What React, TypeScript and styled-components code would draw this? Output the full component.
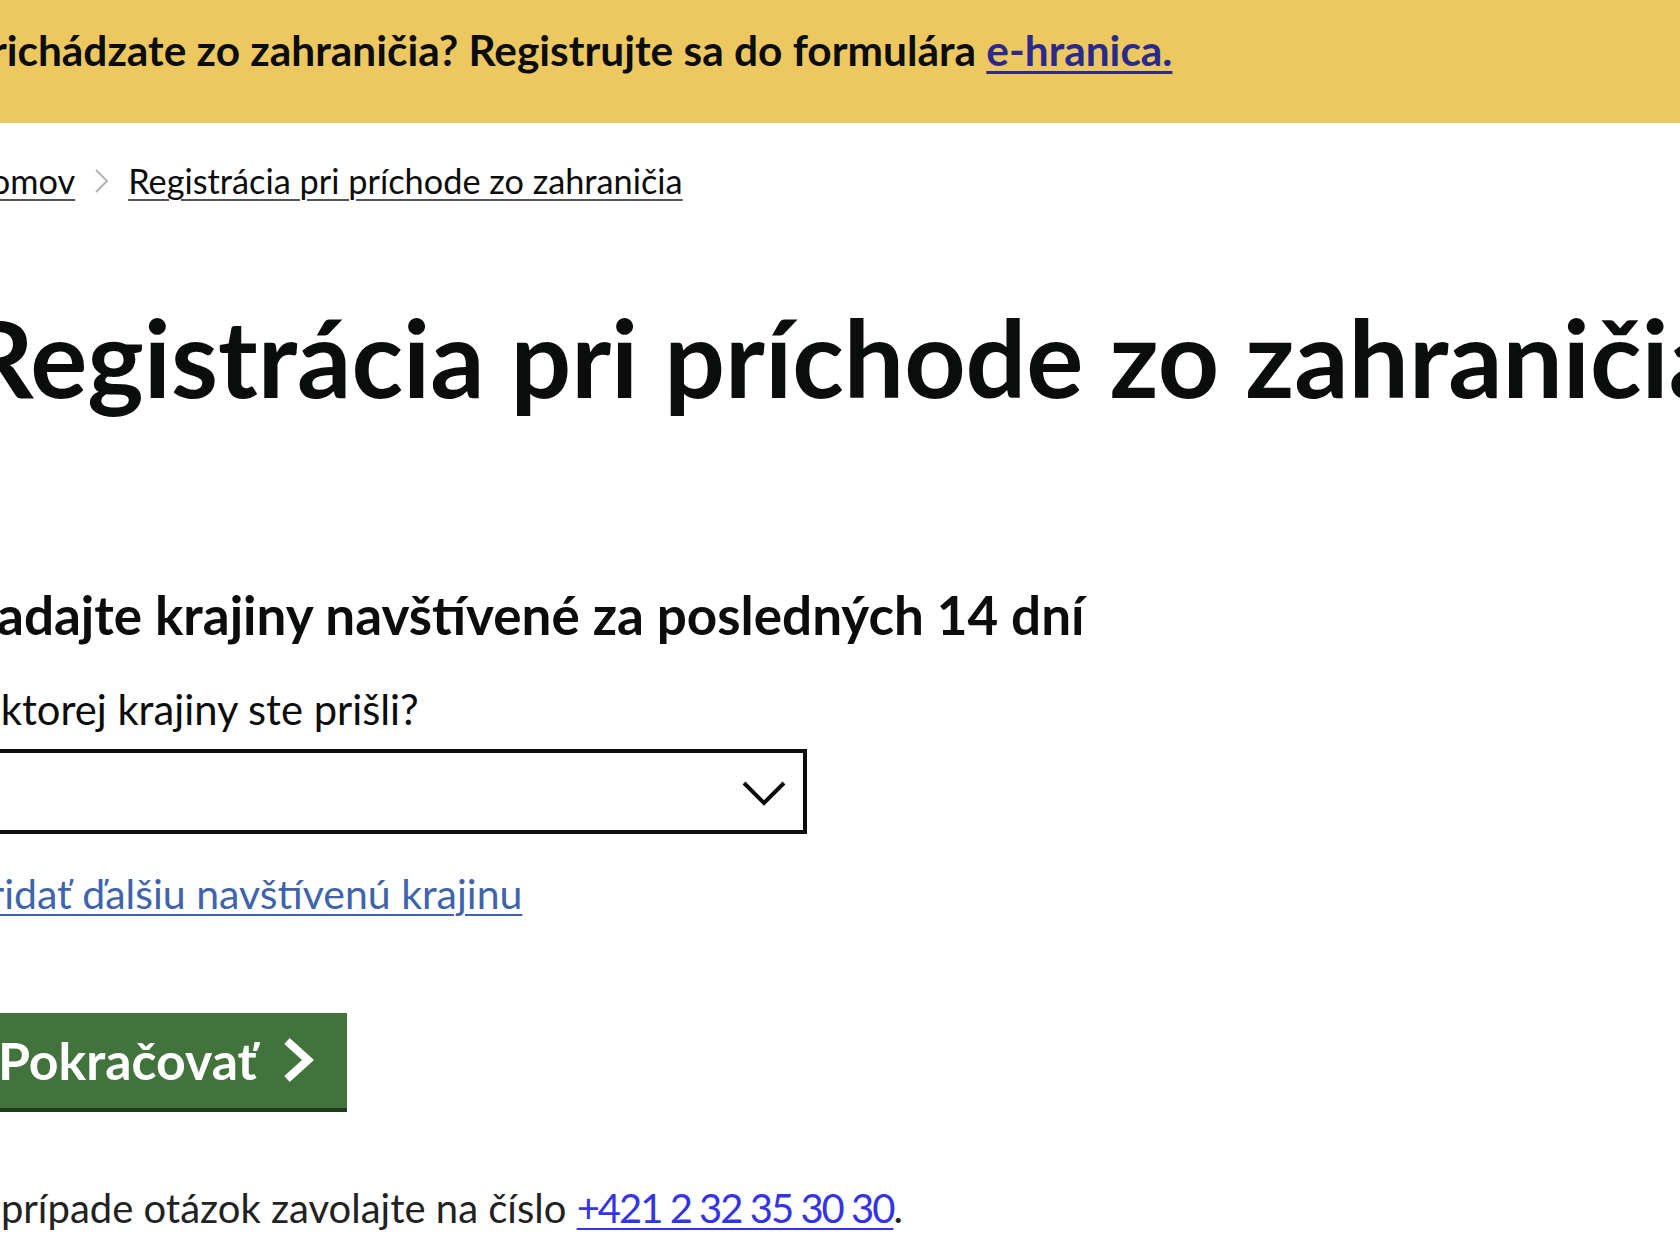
import styled, { createGlobalStyle } from "styled-components";

const GlobalStyle = createGlobalStyle`
  html, body {
    margin: 0;
    padding: 0;
    background: #ffffff;
    overflow: hidden;
  }
  body {
    font-family: Lato, "Open Sans", Arial, sans-serif;
    color: #0b0c0c;
  }
`;

const Page = styled.div`
  width: 1680px;
  height: 1260px;
  overflow: hidden;
`;

const Banner = styled.div`
  background-color: #edc860;
  height: 123px;
  box-sizing: border-box;
  padding-top: 25px;
`;

// the page is scrolled a bit to the right, so everything starts left of the viewport
const Shifted = styled.div`
  margin-left: -35px;
`;

const BannerText = styled.p`
  margin: 0;
  font-size: 42.4px;
  line-height: 50px;
  font-weight: 700;
  white-space: nowrap;

  a {
    color: #2a2a8c;
    text-decoration: underline;
    text-decoration-thickness: 3px;
    text-underline-offset: 5px;
  }
`;

const Main = styled.main`
  display: flex;
  flex-direction: column;
  align-items: flex-start;
`;

const Breadcrumbs = styled.nav`
  margin-top: 37px;
  display: flex;
  align-items: center;
  gap: 19px;
  font-size: 34.3px;
  line-height: 42px;
  white-space: nowrap;
`;

const Crumb = styled.a`
  color: #0b0c0c;
  text-decoration: underline;
  text-decoration-color: #555;
  text-decoration-thickness: 2px;
  text-underline-offset: 5px;
`;

const Heading = styled.h1`
  margin: 90px 0 0;
  font-size: 107px;
  line-height: 129px;
  font-weight: 700;
  white-space: nowrap;
`;

const SubHeading = styled.h2`
  margin: 162px 0 0;
  font-size: 53px;
  line-height: 64px;
  font-weight: 700;
  white-space: nowrap;
`;

const Label = styled.label`
  margin-top: 37px;
  font-size: 41.7px;
  line-height: 50px;
  white-space: nowrap;
`;

const SelectWrap = styled.div`
  position: relative;
  margin-top: 15px;
  width: 842px;
  height: 85px;
`;

const Select = styled.select`
  appearance: none;
  width: 100%;
  height: 100%;
  box-sizing: border-box;
  border: 4px solid #0b0c0c;
  border-radius: 0;
  background: #ffffff;
  font-family: inherit;
  font-size: 40px;
`;

const SelectChevron = styled.svg`
  position: absolute;
  right: 20px;
  top: 31px;
  pointer-events: none;
`;

const AddLink = styled.a`
  margin-top: 35px;
  font-size: 41px;
  line-height: 50px;
  color: #3e64ad;
  text-decoration: underline;
  text-decoration-thickness: 2px;
  text-underline-offset: 5px;
  white-space: nowrap;
`;

const Button = styled.button`
  margin-top: 94px;
  display: flex;
  align-items: center;
  gap: 24px;
  padding: 17px 32px 18px 33px;
  border: none;
  border-radius: 0;
  background-color: #42733d;
  box-shadow: 0 4px 0 #1f3a1c;
  color: #ffffff;
  font-family: inherit;
  font-size: 51.8px;
  line-height: 60px;
  font-weight: 700;
  cursor: pointer;
`;

const Footer = styled.p`
  margin: 76px 0 0;
  font-size: 40px;
  line-height: 49px;
  color: #222;
  white-space: nowrap;

  a {
    color: #3434e6;
    letter-spacing: -2px;
    text-decoration: underline;
    text-decoration-thickness: 2px;
    text-underline-offset: 5px;
  }
`;

const App = () => {
  return (
    <Page>
      <GlobalStyle />
      <Banner>
        <Shifted>
          <BannerText>
            Prichádzate zo zahraničia? Registrujte sa do formulára{" "}
            <a href="#">e-hranica.</a>
          </BannerText>
        </Shifted>
      </Banner>
      <Shifted>
        <Main>
          <Breadcrumbs>
            <Crumb href="#">Domov</Crumb>
            <svg width="15" height="26" viewBox="0 0 15 26">
              <polyline points="2,2 13,13 2,24" fill="none" stroke="#b1b4b6" strokeWidth="2" />
            </svg>
            <Crumb href="#">Registrácia pri príchode zo zahraničia</Crumb>
          </Breadcrumbs>
          <Heading>Registrácia pri príchode zo zahraničia</Heading>
          <SubHeading>Zadajte krajiny navštívené za posledných 14 dní</SubHeading>
          <Label htmlFor="country">Z ktorej krajiny ste prišli?</Label>
          <SelectWrap>
            <Select id="country" defaultValue="">
              <option value=""></option>
            </Select>
            <SelectChevron width="46" height="26" viewBox="0 0 46 26">
              <polyline points="3,3 23,23 43,3" fill="none" stroke="#0b0c0c" strokeWidth="4" />
            </SelectChevron>
          </SelectWrap>
          <AddLink href="#">Pridať ďalšiu navštívenú krajinu</AddLink>
          <Button type="button">
            Pokračovať
            <svg width="34" height="46" viewBox="0 0 34 46">
              <polyline points="6,4 27,23 6,42" fill="none" stroke="#ffffff" strokeWidth="8" />
            </svg>
          </Button>
          <Footer>
            V prípade otázok zavolajte na číslo <a href="tel:+421232353030">+421 2 32 35 30 30</a>.
          </Footer>
        </Main>
      </Shifted>
    </Page>
  );
};

export default App;
